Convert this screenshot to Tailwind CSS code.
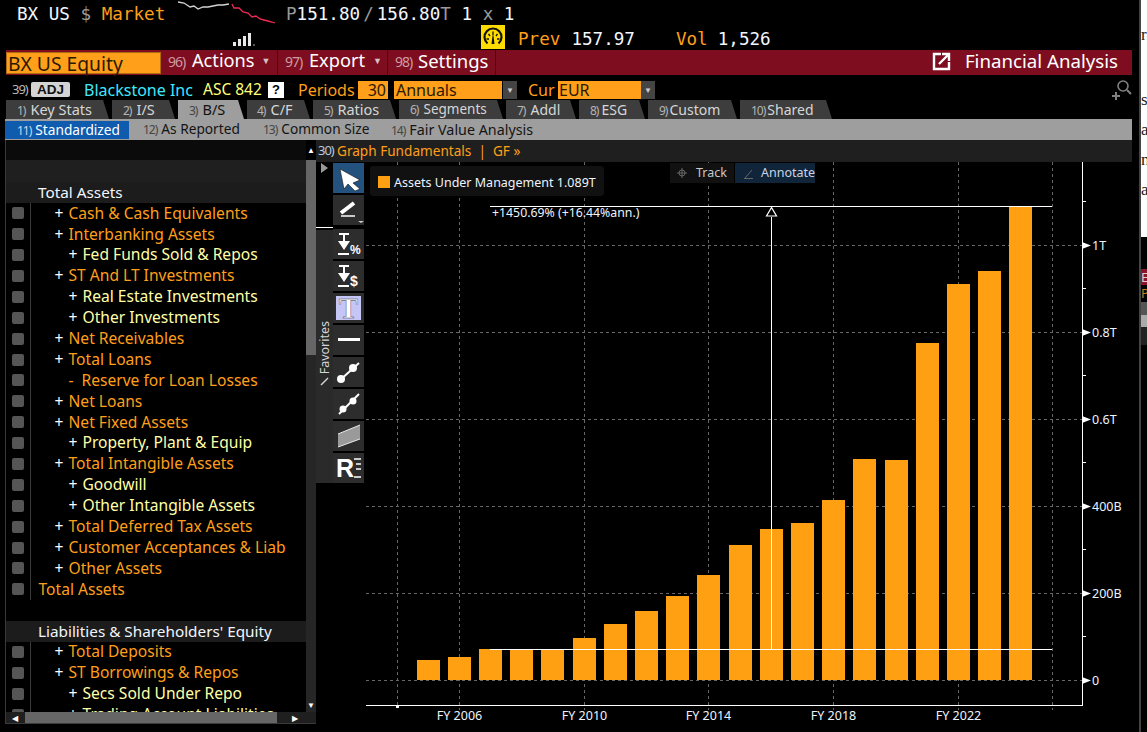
<!doctype html>
<html>
  <head>
    <meta charset="UTF-8" />
    <script src="https://cdn.jsdelivr.net/npm/@tailwindcss/browser@4"></script>
    <title>BX US Equity</title>
  </head>
  <body class="bg-black overflow-hidden">
    <div class="flex w-[1147px] h-[732px] overflow-hidden font-['Noto_Sans',sans-serif] text-[16px] text-[#ff9f1a]">
      <div class="w-[1139px] shrink-0 flex flex-col">

        <!-- ticker rows -->
        <div class="h-[28px] flex items-center pl-[17px] font-['DejaVu_Sans_Mono',monospace] text-[17.6px] whitespace-pre">
          <span class="w-[161px] shrink-0"><span class="text-[#f2f6ff]">BX US</span> <span class="text-[#9a9a9a]">$</span> Market</span>
          <svg class="shrink-0" width="108" height="28" viewBox="178 0 108 28" fill="none" stroke-width="1.3">
            <polyline points="178,2 184,3 190,7 194,6 198,9 203,7 208,7 213,6 218,5 223,5 229,4" stroke="#d4d4d4" />
            <polyline points="232,4 234,8 239,8 243,12 248,13 252,17 256,16 260,19 264,20 268,21 272,22 275,23" stroke="#f02a52" />
          </svg>
          <span class="text-[#9a9a9a]">P</span><span class="text-[#f2f6ff]">151.80</span><span class="text-[#9a9a9a] mx-[3px]">/</span><span class="text-[#f2f6ff]">156.80</span><span class="text-[#9a9a9a]">T</span><span class="text-[#f2f6ff]"> 1 </span><span class="text-[#9a9a9a]">x</span><span class="text-[#f2f6ff]"> 1</span>
        </div>
        <div class="h-[22px] flex items-center font-['DejaVu_Sans_Mono',monospace] text-[17.6px] whitespace-pre">
          <svg class="ml-[232px] shrink-0" width="24" height="16" viewBox="0 0 24 16" fill="#e8e8e8">
            <rect x="1" y="11" width="3" height="4" /><rect x="6" y="8" width="3" height="7" /><rect x="11" y="5" width="3" height="10" /><rect x="16" y="2" width="3" height="13" /><rect x="21" y="13" width="2" height="2" fill="#555" />
          </svg>
          <svg class="ml-[225px] shrink-0 -mt-[4px]" width="24" height="24" viewBox="0 0 24 24" fill="none" stroke="#111">
            <rect width="24" height="24" fill="#ffdc00" stroke="none" />
            <path d="M6.500 18.500a8.500 8.500 0 1 1 11 0" stroke-width="2.200" />
            <path d="M12 6.500v4M7.500 9l1.500 2M16.500 9 15 11M5.500 14H8M18.500 14H16" stroke-width="1.300" />
            <path d="M10.500 19l1-8h1l1 8z" fill="#111" stroke="none" />
          </svg>
          <span class="ml-[13px]">Prev</span><span class="ml-[11px] text-[#f2f6ff]">157.97</span>
          <span class="ml-[41px]">Vol</span><span class="ml-[10px] text-[#f2f6ff]">1,526</span>
        </div>

        <!-- red menu bar -->
        <div class="h-[25px] ml-[6px] w-[1126px] bg-[#7e0e1f] flex items-stretch text-white text-[18.2px]">
          <div class="w-[155px] mt-[2px] mb-[1px] bg-[#ff9f1a] border border-[#b06a10] text-[#2a1a00] pl-[1px] leading-[22px] text-[19.300px]">BX US Equity</div>
          <div class="w-[117px] flex items-center pl-[7px] pb-[3px] border-r border-[#4d0612]"><span class="text-[#cf9aa2] w-[24px] text-[14px] tracking-[-1px]">96)</span>Actions<span class="ml-[7px] text-[9px] text-[#d8c0c4]">▼</span></div>
          <div class="w-[110px] flex items-center pl-[7px] pb-[3px] border-r border-[#4d0612]"><span class="text-[#cf9aa2] w-[24px] text-[14px] tracking-[-1px]">97)</span>Export<span class="ml-[8px] text-[9px] text-[#d8c0c4]">▼</span></div>
          <div class="w-[108px] flex items-center pl-[7px] pb-[3px] border-r border-[#4d0612] text-[18.500px]"><span class="text-[#cf9aa2] w-[23px] text-[14px] tracking-[-1px]">98)</span>Settings</div>
          <div class="flex-1 flex items-center justify-end pr-[14px] pb-[3px] text-[18.700px]">
            <svg width="20" height="20" viewBox="0 0 20 20" fill="none" stroke="#fff" stroke-width="2.400">
              <path d="M9 3H2v15h15v-7" /><path d="M7 13 16 4M10 3h7v7" />
            </svg>
            <span class="ml-[13px]">Financial Analysis</span>
          </div>
        </div>

        <!-- options row -->
        <div class="h-[25px] pt-[4px] flex items-center">
          <span class="ml-[12px] w-[19px] text-[#b9b9b9] text-[13px] tracking-[-1px]">39)</span>
          <span class="w-[39px] h-[15px] bg-[#d4d4d4] rounded-[2px] text-[#111] text-[13.500px] font-bold leading-[15px] text-center font-['Liberation_Sans',sans-serif]">ADJ</span>
          <span class="ml-[14px] w-[119px] text-[#3fe7ff]">Blackstone Inc</span>
          <span class="text-[#ffff7a] w-[65px] text-[15.500px]">ASC 842</span>
          <span class="w-[16px] h-[16px] bg-white text-black text-[13px] font-bold leading-[16px] text-center font-['Liberation_Sans',sans-serif]">?</span>
          <span class="ml-[14px] w-[60px]">Periods</span>
          <span class="w-[30px] h-[18px] bg-[#ff9f1a] text-[#2a1a00] leading-[18px] text-right pr-[2px]">30</span>
          <span class="ml-[6px] w-[108px] h-[18px] bg-[#ff9f1a] text-[#2a1a00] leading-[18px] pl-[2px]">Annuals</span>
          <span class="ml-[1px] w-[14px] h-[18px] bg-[#444] text-[#ccc] text-[8px] leading-[18px] text-center">▼</span>
          <span class="ml-[11px] w-[30px]">Cur</span>
          <span class="w-[83px] h-[18px] bg-[#ff9f1a] text-[#2a1a00] leading-[18px] pl-[1px]">EUR</span>
          <span class="w-[14px] h-[18px] bg-[#444] text-[#ccc] text-[8px] leading-[18px] text-center">▼</span>
          <svg class="ml-auto mr-[7px]" width="24" height="22" viewBox="0 0 24 22" fill="none" stroke="#808080" stroke-width="1.600">
            <circle cx="15" cy="7" r="5" /><path d="m19 11 4 4M8 13v8M4 17h8" stroke-width="2" />
          </svg>
        </div>

        <!-- main tabs -->
        <div class="h-[19px] flex pl-[6px] text-[14.5px] text-[#d6d6d6] leading-[19px]">
          <div class="w-[103px] mr-[3px] bg-[#3d3d3d] pl-[11px] [clip-path:polygon(0_0,calc(100%-6px)_0,100%_100%,0_100%)]"><span class="text-[12px] text-[#b5b5b5] tracking-[-1px] mr-[5px]">1)</span>Key Stats</div>
          <div class="w-[63px] mr-[3px] bg-[#3d3d3d] pl-[11px] [clip-path:polygon(0_0,calc(100%-6px)_0,100%_100%,0_100%)]"><span class="text-[12px] text-[#b5b5b5] tracking-[-1px] mr-[5px]">2)</span>I/S</div>
          <div class="w-[66px] mr-[3px] bg-[#9e9e9e] text-[#111] pl-[11px] [clip-path:polygon(0_0,calc(100%-6px)_0,100%_100%,0_100%)]"><span class="text-[12px] text-[#444] tracking-[-1px] mr-[5px]">3)</span>B/S</div>
          <div class="w-[63px] mr-[3px] bg-[#3d3d3d] pl-[10px] [clip-path:polygon(0_0,calc(100%-6px)_0,100%_100%,0_100%)]"><span class="text-[12px] text-[#b5b5b5] tracking-[-1px] mr-[5px]">4)</span>C/F</div>
          <div class="w-[83px] mr-[3px] bg-[#3d3d3d] pl-[11px] [clip-path:polygon(0_0,calc(100%-6px)_0,100%_100%,0_100%)]"><span class="text-[12px] text-[#b5b5b5] tracking-[-1px] mr-[5px]">5)</span>Ratios</div>
          <div class="w-[104px] mr-[3px] bg-[#3d3d3d] pl-[11px] text-[13.500px] [clip-path:polygon(0_0,calc(100%-6px)_0,100%_100%,0_100%)]"><span class="text-[12px] text-[#b5b5b5] tracking-[-1px] mr-[5px]">6)</span>Segments</div>
          <div class="w-[70px] mr-[3px] bg-[#3d3d3d] pl-[11px] text-[14px] [clip-path:polygon(0_0,calc(100%-6px)_0,100%_100%,0_100%)]"><span class="text-[12px] text-[#b5b5b5] tracking-[-1px] mr-[5px]">7)</span>Addl</div>
          <div class="w-[66px] mr-[3px] bg-[#3d3d3d] pl-[11px] text-[14px] [clip-path:polygon(0_0,calc(100%-6px)_0,100%_100%,0_100%)]"><span class="text-[12px] text-[#b5b5b5] tracking-[-1px] mr-[3px]">8)</span>ESG</div>
          <div class="w-[89px] mr-[3px] bg-[#3d3d3d] pl-[11px] text-[14px] [clip-path:polygon(0_0,calc(100%-6px)_0,100%_100%,0_100%)]"><span class="text-[12px] text-[#b5b5b5] tracking-[-1px] mr-[2px]">9)</span>Custom</div>
          <div class="w-[92px] bg-[#3d3d3d] pl-[11px] text-[14px] [clip-path:polygon(0_0,calc(100%-6px)_0,100%_100%,0_100%)]"><span class="text-[12px] text-[#b5b5b5] tracking-[-1px] mr-[2px]">10)</span>Shared</div>
        </div>

        <!-- sub tabs -->
        <div class="h-[21px] ml-[5px] w-[1127px] bg-[#9e9e9e] flex items-center text-[13.700px] text-[#141414]">
          <div class="w-[124px] h-[18px] bg-[#0f5cae] text-white pl-[12px] leading-[18px]"><span class="text-[12px] text-[#c8d8ee] tracking-[-1px] mr-[4px]">11)</span>Standardized</div>
          <div class="ml-[14px] w-[120px]"><span class="text-[12px] text-[#444] tracking-[-1px] mr-[4px]">12)</span>As Reported</div>
          <div class="w-[128px]"><span class="text-[12px] text-[#444] tracking-[-1px] mr-[4px]">13)</span>Common Size</div>
          <div class="text-[14.300px]"><span class="text-[12px] text-[#444] tracking-[-1px] mr-[4px]">14)</span>Fair Value Analysis</div>
        </div>

        <!-- body: list panel, tools and chart -->
        <div class="flex h-[592px]">
          <div class="ml-[5px] w-[311px] h-[584px] border-l border-b border-[#3a3a3a] flex flex-col">
            <div class="flex flex-1 min-h-0">
              <div class="w-[300px] flex flex-col overflow-hidden">
                <div class="h-[20px] bg-[#0b0b0b] shrink-0"></div>
                <div class="h-[22px] bg-[#1f1f1f] shrink-0"></div>
                <div id="rows" class="flex-1 overflow-hidden text-[15.600px]"></div>
              </div>
              <div class="w-[10px] bg-[#262626] flex flex-col items-center">
                <div class="h-[20px] bg-black w-full text-white text-[8px] leading-[20px] text-center">▲</div>
                <div class="h-[195px] w-full bg-[#666]"></div>
                <div class="flex-1"></div>
                <div class="h-[10px] text-white text-[8px] leading-[10px] mb-[2px]">▼</div>
              </div>
            </div>
            <div class="h-[11px] bg-[#1f1f1f] flex items-center text-[8px] text-white shrink-0">
              <span class="w-[19px] pl-[6px]">◀</span>
              <div class="w-[252px] h-full bg-[#666]"></div>
              <span class="ml-[15px]">▶</span>
            </div>
          </div>

          <div class="w-[816px] flex flex-col">
            <div class="h-[22px] bg-[#1f1f1f] flex items-center pl-[2px] text-[13.600px] whitespace-pre"><span class="text-[13px] text-[#b9c8e0] tracking-[-1px] w-[19px]">30)</span><span>Graph Fundamentals  |  GF »</span></div>
            <div class="flex flex-1 min-h-0">
              <!-- favourites strip and drawing tools -->
              <div class="w-[17px] shrink-0 flex flex-col">
                <svg class="ml-[5px] mt-[1px] shrink-0" width="7" height="10" viewBox="0 0 7 10"><path d="M0 0 7 5 0 10z" fill="#999" /></svg>
                <div class="h-[55px] border-b border-white shrink-0"></div>
                <div class="mt-[2px] h-[253px] bg-[#2a2a2a] flex flex-col items-center justify-center">
                  <span class="[writing-mode:vertical-rl] rotate-180 text-[12.5px] leading-[14px] text-[#d4d4d4] mt-[-6px]">Favorites</span>
                  <svg class="mt-[2px]" width="10" height="10" viewBox="0 0 10 10"><path d="m1 9 7-7" stroke="#d4d4d4" stroke-width="1.500" /></svg>
                </div>
              </div>
              <div class="w-[32px] shrink-0 pt-[1px] flex flex-col">
                <div class="w-[31px] h-[30px] bg-[#24527f] mb-[2px]">
                  <svg width="31" height="30" viewBox="0 0 31 30"><polygon points="7,6 27,17 20,20 27,26 22,28 15,21 11,26" fill="#fff" stroke="#111" stroke-width="0.600" /></svg>
                </div>
                <div class="w-[31px] h-[30px] bg-[#2d2d2d] mb-[4px]">
                  <svg width="31" height="30" viewBox="0 0 31 30" fill="none" stroke="#fff"><path d="m8 18 13-10" stroke-width="4" /><path d="M8 21h14" stroke-width="1.500" /><path d="M25 26h6l-3 2z" fill="#ccc" stroke="none" /></svg>
                </div>
                <div class="w-[31px] h-[30px] bg-[#2d2d2d] mb-[2px]">
                  <svg width="31" height="30" viewBox="0 0 31 30"><path d="M6 5h10M11 5v7M5 25h11" stroke="#fff" stroke-width="2" /><path d="M5 12h12l-6 9z" fill="#fff" /><text x="17" y="25" font-size="12" font-weight="700" fill="#fff" font-family="Liberation Sans">%</text></svg>
                </div>
                <div class="w-[31px] h-[30px] bg-[#2d2d2d] mb-[2px]">
                  <svg width="31" height="30" viewBox="0 0 31 30"><path d="M6 5h10M11 5v7M5 25h11" stroke="#fff" stroke-width="2" /><path d="M5 12h12l-6 9z" fill="#fff" /><text x="17" y="25" font-size="14" font-weight="700" fill="#fff" font-family="Liberation Sans">$</text></svg>
                </div>
                <div class="w-[31px] h-[30px] bg-[#2d2d2d] mb-[2px]">
                  <svg width="31" height="30" viewBox="0 0 31 30"><rect x="3" y="3" width="25" height="24" fill="#c6c6f6" /><text x="15.500" y="25" font-size="29" font-weight="700" text-anchor="middle" fill="#fff" stroke="#33334a" stroke-width="0.400" font-family="Liberation Serif">T</text></svg>
                </div>
                <div class="w-[31px] h-[30px] bg-[#2d2d2d] mb-[2px]">
                  <svg width="31" height="30" viewBox="0 0 31 30"><path d="M5 14.500h22" stroke="#fff" stroke-width="3" /></svg>
                </div>
                <div class="w-[31px] h-[30px] bg-[#2d2d2d] mb-[2px]">
                  <svg width="31" height="30" viewBox="0 0 31 30" fill="#fff"><path d="m6 24 20-18" stroke="#fff" stroke-width="2" /><circle cx="8" cy="22" r="4" /><circle cx="20" cy="11" r="4" /></svg>
                </div>
                <div class="w-[31px] h-[30px] bg-[#2d2d2d] mb-[2px]">
                  <svg width="31" height="30" viewBox="0 0 31 30" fill="#fff"><path d="m6 25 20-20" stroke="#fff" stroke-width="2" /><circle cx="10" cy="20" r="3.500" /><circle cx="20" cy="12" r="3.500" /></svg>
                </div>
                <div class="w-[31px] h-[30px] bg-[#2d2d2d] mb-[2px]">
                  <svg width="31" height="30" viewBox="0 0 31 30"><path d="M5 13 27 4v14L5 26z" fill="#9a9a9a" /><path d="M5 13 27 4" stroke="#e8e8e8" /><path d="M5 26 27 18" stroke="#e8e8e8" /></svg>
                </div>
                <div class="w-[31px] h-[30px] bg-[#2d2d2d] relative">
                  <span class="block pl-[3px] text-white text-[25px] font-bold leading-[30px] font-['Liberation_Sans',sans-serif]">R</span>
                  <svg class="absolute top-0 left-0" width="31" height="30" viewBox="0 0 31 30"><path d="M21 6h7M23 11h5M23 16h5M21 24h7" stroke="#fff" stroke-width="1.500" /></svg>
                </div>
              </div>

              <!-- chart -->
              <svg class="shrink-0" width="767" height="570" viewBox="365 162 767 570" font-family="Noto Sans" font-size="12.500" fill="#eef4ff">
                <g stroke="#666" stroke-dasharray="3 3" fill="none">
                  <path d="M366 245.500h716M366 332.500h716M366 419.500h716M366 506.500h716M366 593.500h716M366 680.500h716" />
                  <path d="M397.500 162v543M459.500 162v548M584.500 162v548M708.500 162v548M833.500 162v548M958.500 162v548M1052.500 162v548" />
                </g>

                <g fill="#ff9f12">
                  <rect x="417" y="660" width="23" height="20" />
                  <rect x="448" y="657" width="23" height="23" />
                  <rect x="479" y="649" width="23" height="31" />
                  <rect x="510" y="649" width="23" height="31" />
                  <rect x="541" y="649" width="23" height="31" />
                  <rect x="573" y="638" width="23" height="42" />
                  <rect x="604" y="624" width="23" height="56" />
                  <rect x="635" y="611" width="23" height="69" />
                  <rect x="666" y="596" width="23" height="84" />
                  <rect x="697" y="575" width="23" height="105" />
                  <rect x="729" y="545" width="23" height="135" />
                  <rect x="760" y="529" width="23" height="151" />
                  <rect x="791" y="523" width="23" height="157" />
                  <rect x="822" y="500" width="23" height="180" />
                  <rect x="853" y="459" width="23" height="221" />
                  <rect x="885" y="460" width="23" height="220" />
                  <rect x="916" y="343" width="23" height="337" />
                  <rect x="947" y="284" width="23" height="396" />
                  <rect x="978" y="271" width="23" height="409" />
                  <rect x="1009" y="207" width="23" height="473" />
                </g>

                <!-- change measure -->
                <g stroke="#fff" fill="none">
                  <path d="M490 206.500h562M490 649.500h562M771.500 217v432" />
                  <path d="M771.500 207.500 766.500 216h10z" stroke-width="1.200" />
                </g>
                <text x="492" y="217" font-size="12.300">+1450.69% (+16.44%ann.)</text>

                <!-- axes -->
                <path d="M366 705.500h717M1082.500 162v544" stroke="#fff" fill="none" />
                <path d="M1082 201.500h4M1082 288.500h4M1082 375.500h4M1082 462.500h4M1082 549.500h4M1082 636.500h4" stroke="#fff" fill="none" />
                <rect x="396" y="705" width="3" height="3" fill="#fff" />
                <g fill="#fff">
                  <path d="M1082 242 1091 245.500 1082 249z" />
                  <path d="M1082 329 1091 332.500 1082 336z" />
                  <path d="M1082 416 1091 419.500 1082 423z" />
                  <path d="M1082 503 1091 506.500 1082 510z" />
                  <path d="M1082 590 1091 593.500 1082 597z" />
                  <path d="M1082 677 1091 680.500 1082 684z" />
                </g>
                <text x="1092" y="250">1T</text>
                <text x="1092" y="337">0.8T</text>
                <text x="1092" y="424">0.6T</text>
                <text x="1092" y="511">400B</text>
                <text x="1092" y="598">200B</text>
                <text x="1092" y="685">0</text>
                <text x="459.500" y="720" text-anchor="middle">FY 2006</text>
                <text x="584.500" y="720" text-anchor="middle">FY 2010</text>
                <text x="708.500" y="720" text-anchor="middle">FY 2014</text>
                <text x="833.500" y="720" text-anchor="middle">FY 2018</text>
                <text x="958.500" y="720" text-anchor="middle">FY 2022</text>

                <!-- legend -->
                <rect x="370" y="166" width="234" height="30" rx="3" fill="#111" />
                <rect x="378" y="176" width="12" height="12" fill="#ff9f12" />
                <text x="394" y="186.500">Assets Under Management 1.089T</text>

                <!-- track and annotate -->
                <rect x="670" y="163" width="64" height="20" fill="#111" />
                <rect x="735" y="163" width="80" height="20" fill="#10243a" />
                <path d="M682 168v10M677 173h10" stroke="#666" />
                <circle cx="682" cy="173" r="3" fill="none" stroke="#666" />
                <path d="M745 178 752 170M744 178.500h9" stroke="#666" />
                <text x="696" y="177" fill="#c8c8c8">Track</text>
                <text x="761" y="177" fill="#c8d4e4">Annotate</text>
              </svg>
            </div>
          </div>
        </div>
      </div>

      <!-- sliver of the window behind -->
      <div class="w-[8px] shrink-0 border-l-2 border-[#444] flex flex-col bg-black overflow-hidden font-['Liberation_Serif',serif] text-[#222] text-[17px] leading-[30px]">
        <div class="h-[237px] bg-white pt-[20px] shrink-0">
          <div>r</div><div class="mt-[35px]">s:</div><div>a</div><div>n</div><div>a</div>
        </div>
        <div class="h-[32px] shrink-0"></div>
        <div class="h-[16px] bg-[#8a1528] shrink-0 text-[#e8c8c8] text-[13px] leading-[16px] font-['Noto_Sans',sans-serif]">Ex</div>
        <div class="h-[17px] shrink-0 text-[#c47a20] text-[13px] leading-[17px] font-['Noto_Sans',sans-serif]">P</div>
        <div class="h-[13px] bg-[#555] shrink-0"></div>
        <div class="h-[12px] bg-[#aaa] shrink-0"></div>
        <div class="h-[18px] bg-[#222] shrink-0"></div>
      </div>
    </div>

    <script>
      // statement lines: [label, depth, sign, kind]
      const rows = [
        ['Total Assets', 0, '', 'head'],
        ['Cash & Cash Equivalents', 1, '+'],
        ['Interbanking Assets', 1, '+'],
        ['Fed Funds Sold & Repos', 2, '+'],
        ['ST And LT Investments', 1, '+'],
        ['Real Estate Investments', 2, '+'],
        ['Other Investments', 2, '+'],
        ['Net Receivables', 1, '+'],
        ['Total Loans', 1, '+'],
        ['Reserve for Loan Losses', 1, '-'],
        ['Net Loans', 1, '+'],
        ['Net Fixed Assets', 1, '+'],
        ['Property, Plant & Equip', 2, '+'],
        ['Total Intangible Assets', 1, '+'],
        ['Goodwill', 2, '+'],
        ['Other Intangible Assets', 2, '+'],
        ['Total Deferred Tax Assets', 1, '+'],
        ['Customer Acceptances & Liab', 1, '+'],
        ['Other Assets', 1, '+'],
        ['Total Assets', 0, ''],
        ['', 0, '', 'gap'],
        ["Liabilities & Shareholders' Equity", 0, '', 'head'],
        ['Total Deposits', 1, '+'],
        ['ST Borrowings & Repos', 1, '+'],
        ['Secs Sold Under Repo', 2, '+'],
        ['Trading Account Liabilities', 2, '+']
      ];
      document.getElementById('rows').innerHTML = rows.map(function(r) {
        const label = r[0].replace(/&/g, '&amp;');
        if (r[3] === 'gap') return '<div class="h-[20.9px]"></div>';
        if (r[3] === 'head') {
          return '<div class="h-[20.9px] bg-[#1c1c1c] text-[#f2f6ff] text-[15.300px] flex items-center pl-[32px]"><span>' + label + '</span></div>';
        }
        let text = '';
        if (r[1] === 0) text = '<span class="ml-[8px] text-[#ff9f1a]">' + label + '</span>';
        if (r[1] === 1 && r[2] === '+') text = '<span class="ml-[24px] w-[14px] text-white">+</span><span class="text-[#ff9f1a]">' + label + '</span>';
        if (r[1] === 1 && r[2] === '-') text = '<span class="ml-[38px] w-[13px] text-[#ff9f1a]">-</span><span class="text-[#ff9f1a]">' + label + '</span>';
        if (r[1] === 2) text = '<span class="ml-[38px] w-[14px] text-white">+</span><span class="text-[#ffffa8]">' + label + '</span>';
        return '<div class="h-[20.9px] flex items-center whitespace-nowrap"><div class="w-[24.500px] h-full border-r border-[#3a3a3a] flex items-center justify-center shrink-0"><span class="w-[12px] h-[12px] bg-[#555] rounded-[2px] block"></span></div>' + text + '</div>';
      }).join('');
    </script>
  </body>
</html>
